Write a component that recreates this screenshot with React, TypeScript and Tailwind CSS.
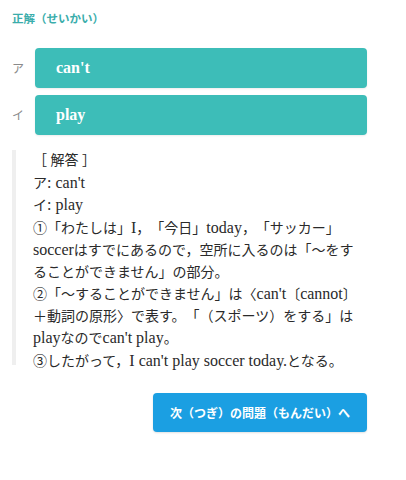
import type { ReactNode } from "react";

const jp = "font-['Noto_Sans_CJK_JP','Noto_Sans',sans-serif]";
const serif = "font-['Liberation_Serif','Noto_Sans_CJK_JP',serif]";

// latin runs are a bit bigger than the kana around them
function E({ children }: { children: ReactNode }) {
    return <span className="text-[16px]">{children}</span>;
}

const choices = [
    { mark: "ア", text: "can't" },
    { mark: "イ", text: "play" },
];

export default function App() {
    return (
        <div className="w-[406px] h-[480px] bg-white overflow-hidden [text-spacing-trim:space-all]">
            <div className="ml-3 w-[355px] pt-[10px]">
                <p className={`${jp} text-[11.5px] leading-[16px] font-bold text-[#3aadab]`}>
                    正解（せいかい）
                </p>

                <div className="mt-[22px] flex flex-col gap-[7px]">
                    {choices.map((c) => (
                        <div key={c.mark} className="flex items-center">
                            <span className={`${jp} w-[23px] text-[12px] text-[#8a8a8a]`}>{c.mark}</span>
                            <div className="flex-1 h-[40px] rounded-[4px] bg-[#3dbdb8] flex items-center pl-[21px] shadow-[0_1px_2px_rgba(0,0,0,0.08)]">
                                <span className={`${serif} text-[16px] font-bold text-white`}>{c.text}</span>
                            </div>
                        </div>
                    ))}
                </div>

                <div className={`${serif} mt-[15px] h-[215px] border-l-4 border-[#efefef] pl-[17px] text-[14px] leading-[21.5px] text-[#2a2a2a] whitespace-nowrap`}>
                    <div>［ 解答 ］</div>
                    <div>ア<E>: can't</E></div>
                    <div>イ<E>: play</E></div>
                    <div>①「わたしは」<E>I</E>，「今日」<E>today</E>，「サッカー」</div>
                    <div><E>soccer</E>はすでにあるので，空所に入るのは「〜をす</div>
                    <div>ることができません」の部分。</div>
                    <div>②「〜することができません」は〈<E>can't</E>〔<E>cannot</E>〕</div>
                    <div>＋動詞の原形〉で表す。「（スポーツ）をする」は</div>
                    <div><E>play</E>なので<E>can't play</E>。</div>
                    <div>③したがって，<E>I can't play soccer today.</E>となる。</div>
                </div>

                <div className="mt-[28px] flex justify-end">
                    <button className={`${jp} w-[214px] h-[39px] rounded-[4px] bg-[#1b9fe2] text-white text-[12px] font-bold shadow-[0_1px_2px_rgba(0,0,0,0.12)]`}>
                        次（つぎ）の問題（もんだい）へ
                    </button>
                </div>
            </div>
        </div>
    );
}
